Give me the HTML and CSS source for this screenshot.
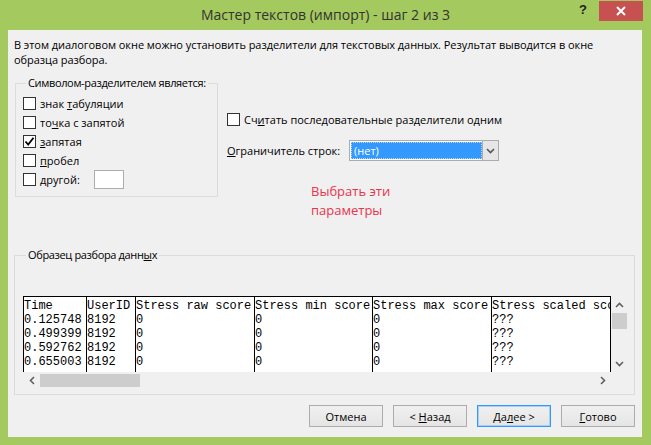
FILE: index.html
```html
<!DOCTYPE html>
<html lang="ru">
<head>
<meta charset="utf-8">
<title>Мастер текстов</title>
<link rel="stylesheet" href="styles.css">
</head>
<body>
<div class="window">
  <div class="titlebar">
    <div class="title">Мастер текстов (импорт) - шаг 2 из 3</div>
    <div class="help">?</div>
    <div class="close">
      <svg width="10" height="10" viewBox="0 0 10 10"><path d="M1 1 L9 9 M9 1 L1 9" stroke="#fff" stroke-width="2"/></svg>
    </div>
  </div>
  <div class="client">
    <p class="intro">В этом диалоговом окне можно установить разделители для текстовых данных. Результат выводится в окне образца разбора.</p>
    <div class="options">
      <fieldset class="group delims">
        <legend>Символом-разделителем является:</legend>
        <label class="chk"><span class="box"></span><span>знак <u>т</u>абуляции</span></label>
        <label class="chk"><span class="box"></span><span>то<u>ч</u>ка с запятой</span></label>
        <label class="chk"><span class="box"><svg width="11" height="11" viewBox="0 0 11 11"><path d="M1.5 5.5 L4.2 8.5 L9.5 1.8" fill="none" stroke="#000" stroke-width="1.8"/></svg></span><span><u>з</u>апятая</span></label>
        <label class="chk"><span class="box"></span><span><u>п</u>робел</span></label>
        <label class="chk"><span class="box"></span><span class="otherlbl"><u>д</u>ругой:</span><span class="otherbox"></span></label>
      </fieldset>
      <div class="rightcol">
        <label class="chk"><span class="box"></span><span>Сч<u>и</u>тать последовательные разделители одним</span></label>
        <div class="qualifier">
          <span class="qlabel"><u>О</u>граничитель строк:</span>
          <div class="combo"><span class="sel">(нет)</span><span class="arrow"><svg width="9" height="6" viewBox="0 0 9 6"><path d="M1 1 L4.5 4.5 L8 1" fill="none" stroke="#555" stroke-width="1.6"/></svg></span></div>
        </div>
        <div class="note">Выбрать эти<br>параметры</div>
      </div>
    </div>
    <fieldset class="group preview">
      <legend>Образец разбора данн<u>ы</u>х</legend>
      <div class="scroller">
        <div class="grid">
          <div class="col c1"><div>Time</div><div>0.125748</div><div>0.499399</div><div>0.592762</div><div>0.655003</div></div>
          <div class="col c2"><div>UserID</div><div>8192</div><div>8192</div><div>8192</div><div>8192</div></div>
          <div class="col c3"><div>Stress raw score</div><div>0</div><div>0</div><div>0</div><div>0</div></div>
          <div class="col c4"><div>Stress min score</div><div>0</div><div>0</div><div>0</div><div>0</div></div>
          <div class="col c5"><div>Stress max score</div><div>0</div><div>0</div><div>0</div><div>0</div></div>
          <div class="col c6"><div>Stress scaled sco</div><div>???</div><div>???</div><div>???</div><div>???</div></div>
        </div>
        <div class="vscroll">
          <div class="sbtn"><svg width="9" height="6" viewBox="0 0 9 6"><path d="M1 5 L4.5 1.5 L8 5" fill="none" stroke="#606060" stroke-width="1.6"/></svg></div>
          <div class="vthumb"></div>
          <div class="vspace"></div>
          <div class="sbtn"><svg width="9" height="6" viewBox="0 0 9 6"><path d="M1 1 L4.5 4.5 L8 1" fill="none" stroke="#606060" stroke-width="1.6"/></svg></div>
        </div>
        <div class="hscroll">
          <div class="hbtn"><svg width="6" height="9" viewBox="0 0 6 9"><path d="M5 1 L1.5 4.5 L5 8" fill="none" stroke="#606060" stroke-width="1.6"/></svg></div>
          <div class="hthumb"></div>
          <div class="hspace"></div>
          <div class="hbtn"><svg width="6" height="9" viewBox="0 0 6 9"><path d="M1 1 L4.5 4.5 L1 8" fill="none" stroke="#606060" stroke-width="1.6"/></svg></div>
        </div>
        <div class="corner"></div>
      </div>
    </fieldset>
    <div class="buttons">
      <button class="btn">Отмена</button>
      <button class="btn">&lt; <u>Н</u>азад</button>
      <button class="btn default">Да<u>л</u>ее &gt;</button>
      <button class="btn"><u>Г</u>отово</button>
    </div>
  </div>
</div>
</body>
</html>
```
FILE: styles.css
```css
* { box-sizing: border-box; }
html, body { margin: 0; padding: 0; }
body {
  width: 651px;
  height: 445px;
  overflow: hidden;
  font-family: "Open Sans", "Noto Sans", sans-serif;
  font-size: 11px;
  color: #000;
}
.window {
  width: 651px;
  height: 445px;
  background: #a4c95e;
  padding: 0 9px 8px 8px;
  display: flex;
  flex-direction: column;
}
.titlebar {
  height: 30px;
  position: relative;
  flex: none;
}
.title {
  text-align: center;
  font-size: 14px;
  line-height: 30px;
  color: #333;
  margin-left: -8px;
  margin-right: -9px;
}
.help {
  position: absolute;
  left: 571px;
  top: 2px;
  font-weight: bold;
  font-size: 13px;
  color: #222;
  font-family: "Liberation Sans", sans-serif;
}
.close {
  position: absolute;
  left: 591px;
  top: 1px;
  width: 44px;
  height: 20px;
  background: #c75050;
  display: flex;
  align-items: center;
  justify-content: center;
}
.client {
  flex: 1;
  background: #f0f0f0;
  padding: 7px 7px 10px 6px;
  display: flex;
  flex-direction: column;
}
.intro {
  margin: 0;
  line-height: 15px;
  max-width: 596px;
  letter-spacing: -0.05px;
}
.options {
  display: flex;
  margin-top: 9px;
  height: 121px;
  flex: none;
}
.group {
  border: 1px solid #dcdcdc;
  margin: 0;
  padding: 0;
  min-width: 0;
}
.group legend {
  padding: 0 2px;
  margin-left: 3px;
  line-height: 14px;
  white-space: nowrap;
  letter-spacing: -0.35px;
}
.delims {
  width: 203px;
  height: 121px;
  padding: 7px 0 0 7px;
  margin-left: 1px;
  display: flex;
  flex-direction: column;
  gap: 6px;
}
.chk {
  display: flex;
  align-items: center;
  gap: 4px;
  height: 13px;
  line-height: 13px;
  white-space: nowrap;
}
.box {
  width: 13px;
  height: 13px;
  border: 1px solid #333;
  background: #fff;
  display: flex;
  align-items: center;
  justify-content: center;
  flex: none;
}
.otherlbl { width: 50px; }
.otherbox {
  width: 30px;
  height: 19px;
  border: 1px solid #abadb3;
  background: #fff;
  flex: none;
}
.rightcol {
  margin-left: 9px;
  padding-top: 37px;
  display: flex;
  flex-direction: column;
}
.qualifier {
  display: flex;
  align-items: center;
  margin-top: 14px;
}
.qlabel { width: 122px; }
.combo {
  width: 150px;
  height: 21px;
  border: 1px solid #abadb3;
  background: #fff;
  padding: 1px;
  display: flex;
}
.sel {
  flex: 1;
  background: #3399ff;
  color: #fff;
  line-height: 15px;
  padding-left: 2px;
  border: 1px dotted #bcd8f5;
}
.arrow {
  width: 17px;
  background: #e6e6e6;
  border: 1px solid #acacac;
  display: flex;
  align-items: center;
  justify-content: center;
  margin: -2px -2px -2px 0;
}
.note {
  color: #e8344d;
  font-size: 13px;
  line-height: 19px;
  margin-left: 84px;
  margin-top: 21px;
}
.preview {
  margin-top: 51px;
  height: 147px;
  padding: 34px 6px 0 8px;
  flex: none;
}
.scroller {
  display: grid;
  grid-template-columns: 588px 17px;
  grid-template-rows: 76px 16px;
  width: 605px;
}
.grid {
  background: #fff;
  display: flex;
  overflow: hidden;
  border-top: 1px solid #000;
  border-right: 1px solid #000;
  font-family: "Liberation Mono", "Courier New", monospace;
  font-size: 12px;
  line-height: 14px;
  padding-top: 2px;
}
.col {
  border-left: 1px solid #000;
  white-space: nowrap;
  flex: none;
  margin-top: -2px;
  padding-top: 2px;
}
.c1 { width: 63px; }
.c2 { width: 49px; }
.c3 { width: 119px; }
.c4 { width: 118px; }
.c5 { width: 119px; }
.c6 { width: 140px; }
.vscroll {
  background: #f0f0f0;
  display: flex;
  flex-direction: column;
  align-items: center;
}
.sbtn {
  height: 17px;
  width: 17px;
  display: flex;
  align-items: center;
  justify-content: center;
  flex: none;
}
.vthumb {
  width: 15px;
  height: 16px;
  background: #cdcdcd;
  flex: none;
}
.vspace { flex: 1; }
.hscroll {
  background: #f0f0f0;
  display: flex;
  align-items: center;
}
.hbtn {
  width: 17px;
  height: 16px;
  display: flex;
  align-items: center;
  justify-content: center;
  flex: none;
}
.hthumb {
  width: 100px;
  height: 13px;
  background: #cdcdcd;
  flex: none;
}
.hspace { flex: 1; }
.corner { background: #f0f0f0; }
.buttons {
  display: flex;
  justify-content: flex-end;
  gap: 10px;
  margin-top: auto;
}
.btn {
  width: 74px;
  height: 22px;
  border: 1px solid #acacac;
  background: linear-gradient(#f0f0f0, #e5e5e5);
  font-family: "Open Sans", "Noto Sans", sans-serif;
  font-size: 11px;
  color: #000;
  padding: 0;
}
.btn.default {
  border: 1px solid #3399ff;
  box-shadow: inset 0 0 0 1px #a8d0f7;
}
```
